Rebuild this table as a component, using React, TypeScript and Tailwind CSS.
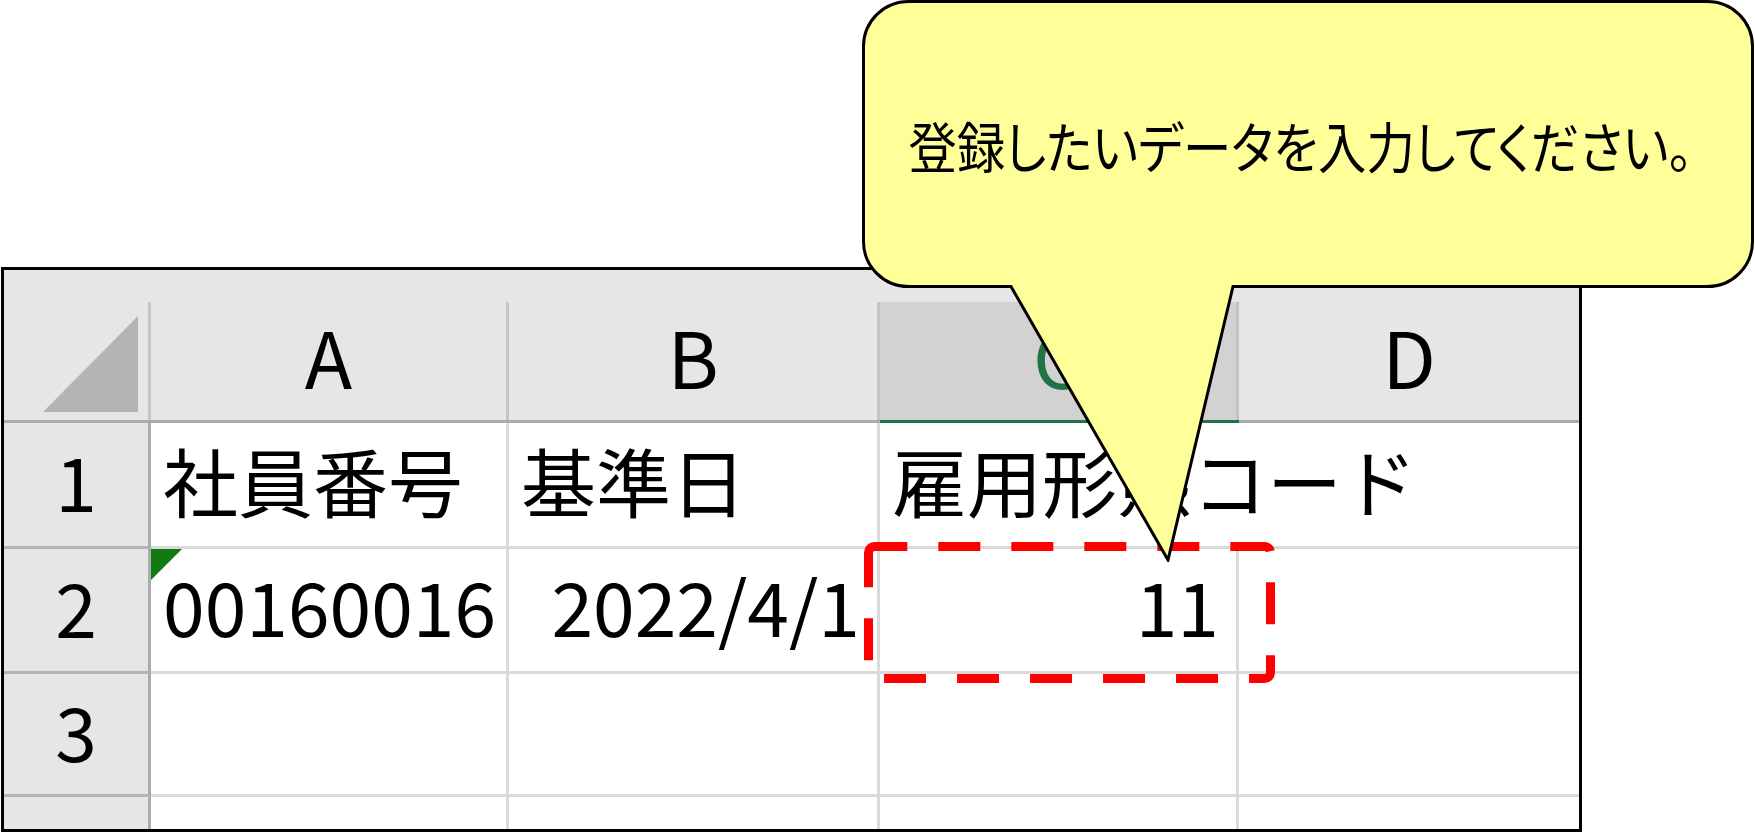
import React from "react";
import clsx from "clsx";

// column header (A, B, C, D)
function ColHead({ label, selected = false, edge = false }: { label: string; selected?: boolean; edge?: boolean }) {
  return (
    <div
      className={clsx(
        "flex flex-col bg-[#e6e6e6] border-b-[3px]",
        selected ? "border-b-[#217346]" : "border-b-[#ababab]"
      )}
    >
      <div className="h-[32px]" />
      <div
        className={clsx(
          "flex flex-1 items-center justify-center pb-[12px] text-[78px] leading-none",
          selected ? "bg-[#d2d2d2] text-[#217346]" : "text-black",
          !edge && "border-r-[3px] border-r-[#c4c4c4]"
        )}
      >
        {label}
      </div>
    </div>
  );
}

function RowHead({ n, last = false }: { n?: string; last?: boolean }) {
  return (
    <div
      className={clsx(
        "flex items-center justify-center pb-[10px] bg-[#e6e6e6] border-r-[3px] border-r-[#ababab] text-[75px] leading-none",
        !last && "border-b-[3px] border-b-[#b4b4b4]"
      )}
    >
      {n}
    </div>
  );
}

function Cell({
  children,
  right = false,
  noR = false,
  noB = false,
  className,
}: {
  children?: React.ReactNode;
  right?: boolean;
  noR?: boolean;
  noB?: boolean;
  className?: string;
}) {
  return (
    <div
      className={clsx(
        "relative flex items-center whitespace-nowrap pb-[11px] text-[75px] leading-none",
        right ? "justify-end pr-[17px]" : "justify-start pl-[12px]",
        !noR && "border-r-[3px] border-r-[#dadada]",
        !noB && "border-b-[3px] border-b-[#dadada]",
        className
      )}
    >
      {children}
    </div>
  );
}

function Sheet() {
  return (
    <div className="w-[1581px] h-[565px] border-[3px] border-black grid grid-cols-[147px_358px_371px_359px_340px] grid-rows-[153px_126px_125px_123px_32px]">
      {/* header row */}
      <div className="flex flex-col bg-[#e6e6e6] border-b-[3px] border-b-[#ababab]">
        <div className="h-[32px]" />
        <div className="flex flex-1 items-end justify-end pr-[10px] pb-[8px] border-r-[3px] border-r-[#c4c4c4]">
          <svg width="95" height="96" viewBox="0 0 95 96">
            <polygon points="95,0 95,96 0,96" fill="#b4b4b4" />
          </svg>
        </div>
      </div>
      <ColHead label="A" />
      <ColHead label="B" />
      <ColHead label="C" selected />
      <ColHead label="D" edge />

      {/* row 1 */}
      <RowHead n="1" />
      <Cell>社員番号</Cell>
      <Cell>基準日</Cell>
      <Cell noR>雇用形態コード</Cell>
      <Cell noR />

      {/* row 2 */}
      <RowHead n="2" />
      <Cell>
        <svg className="absolute left-0 top-0" width="31" height="31" viewBox="0 0 31 31">
          <polygon points="0,0 31,0 0,31" fill="#127a12" />
        </svg>
        00160016
      </Cell>
      <Cell right>2022/4/1</Cell>
      <Cell right>11</Cell>
      <Cell noR />

      {/* row 3 */}
      <RowHead n="3" />
      <Cell />
      <Cell />
      <Cell />
      <Cell noR />

      {/* row 4 (cut off) */}
      <RowHead last />
      <Cell noB />
      <Cell noB />
      <Cell noB />
      <Cell noB noR />
    </div>
  );
}

function DashedMark() {
  return (
    <svg className="absolute left-[860px] top-[538px]" width="420" height="150" viewBox="0 0 420 150">
      <path
        d="M8.5 14.5 A6 6 0 0 1 14.5 8.5 H404.5 A6 6 0 0 1 410.5 14.5 V134.5 A6 6 0 0 1 404.5 140.5 H14.5 A6 6 0 0 1 8.5 134.5 Z"
        fill="none"
        stroke="#ff0000"
        strokeWidth="9"
        strokeDasharray="42 31"
      />
    </svg>
  );
}

function Callout() {
  return (
    <div className="absolute left-[862px] top-0 w-[893px] h-[562px]">
      <svg className="absolute inset-0" width="893" height="562" viewBox="0 0 893 562">
        <path
          d="M46.5 1.5 H845.5 A45 45 0 0 1 890.5 46.5 V241.5 A45 45 0 0 1 845.5 286.5 H371 L306 560 L149 286.5 H46.5 A45 45 0 0 1 1.5 241.5 V46.5 A45 45 0 0 1 46.5 1.5 Z"
          fill="#ffff99"
          stroke="#000"
          strokeWidth="3"
          strokeLinejoin="miter"
        />
      </svg>
      <div className="relative flex h-[288px] items-center justify-center pr-[16px]">
        <span className="inline-block flex-none whitespace-nowrap scale-x-[0.88] text-[55px] leading-none text-black [font-feature-settings:'palt']">
          登録したいデータを入力してください。
        </span>
      </div>
    </div>
  );
}

export default function App() {
  return (
    <div className="relative w-[1755px] h-[832px] overflow-hidden bg-white pl-[1px] pt-[267px] font-['Noto_Sans_CJK_JP',sans-serif] text-black">
      <Sheet />
      <DashedMark />
      <Callout />
    </div>
  );
}
